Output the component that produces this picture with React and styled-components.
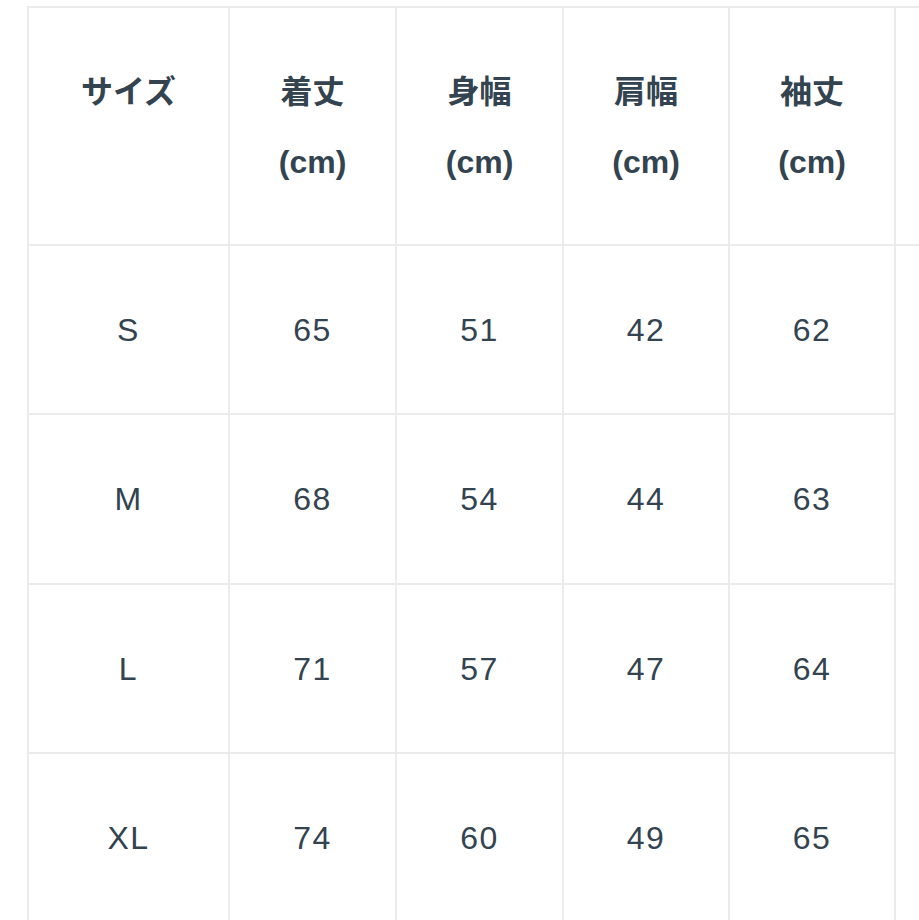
import React from "react";
import styled, { createGlobalStyle } from "styled-components";

const Global = createGlobalStyle`
  html, body { margin: 0; padding: 0; background: #ffffff; overflow: hidden; }
  body { font-family: "Liberation Sans", "Noto Sans CJK JP", sans-serif; }
`;

const Scroller = styled.div`
  width: 919px;
  height: 920px;
  overflow: hidden;
  padding: 6px 0 0 27px;
  box-sizing: border-box;
`;

const Table = styled.table`
  border-collapse: collapse;
  table-layout: fixed;
  width: 1035px;
  color: #33434f;
`;

const Col = styled.col`
  width: ${(p) => p.$w}px;
`;

const HeadCell = styled.th`
  border: 2px solid #ebebeb;
  height: 232px;
  padding: 49px 0 47px;
  box-sizing: border-box;
  vertical-align: top;
  text-align: center;
  font-family: "Liberation Sans", "Noto Sans CJK JP", sans-serif;
  font-weight: 700;
  font-size: 32px;
  line-height: 70px;
`;

const HeadLine = styled.span`
  display: block;
`;

const Row = styled.tr`
  height: ${(p) => p.$h}px;
`;

const Cell = styled.td`
  border: 2px solid #ebebeb;
  text-align: center;
  vertical-align: middle;
  padding: 0;
  font-size: 32px;
  font-weight: 400;
  letter-spacing: 1.5px;
  line-height: 40px;
`;

const headers = [
  ["サイズ"],
  ["着丈", "(cm)"],
  ["身幅", "(cm)"],
  ["肩幅", "(cm)"],
  ["袖丈", "(cm)"],
  [""],
];

const rows = [
  ["S", "65", "51", "42", "62"],
  ["M", "68", "54", "44", "63"],
  ["L", "71", "57", "47", "64"],
  ["XL", "74", "60", "49", "65"],
];

const widths = [201, 167, 167, 166, 166, 168];
const heights = [169, 170, 169, 169];

export default function App() {
  return (
    <>
      <Global />
      <Scroller>
        <Table>
          <colgroup>
            {widths.map((w, i) => (
              <Col key={i} $w={w} />
            ))}
          </colgroup>
          <thead>
            <tr>
              {headers.map((lines, i) => (
                <HeadCell key={i}>
                  {lines.map((l, j) => (
                    <HeadLine key={j}>{l || "\u00a0"}</HeadLine>
                  ))}
                </HeadCell>
              ))}
            </tr>
          </thead>
          <tbody>
            {rows.map((r, i) => (
              <Row key={i} $h={heights[i]}>
                {r.map((c, j) => (
                  <Cell key={j}>{c}</Cell>
                ))}
              </Row>
            ))}
          </tbody>
        </Table>
      </Scroller>
    </>
  );
}
